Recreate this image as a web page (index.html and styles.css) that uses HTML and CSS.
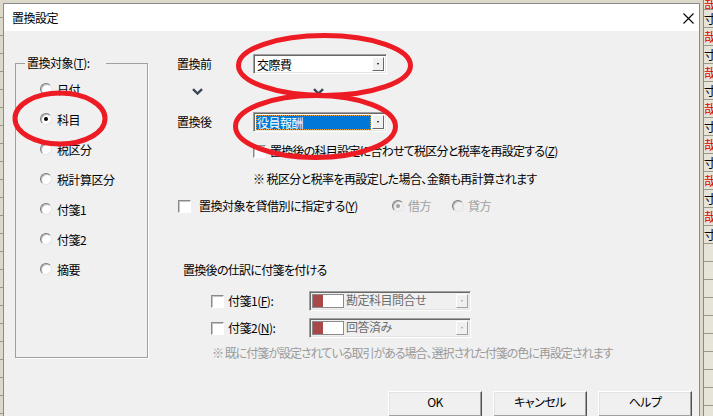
FILE: index.html
```html
<!DOCTYPE html>
<html lang="ja">
<head>
<meta charset="UTF-8">
<title>置換設定</title>
<link rel="stylesheet" href="styles.css">
</head>
<body>

<div class="sheet-edge"></div>

<div class="dialog">
    <div class="titlebar">
        <span class="title">置換設定</span>
        <svg class="close" width="11" height="11" viewBox="0 0 11 11"><path d="M0.5 0.5 L10.5 10.5 M10.5 0.5 L0.5 10.5" stroke="#000" stroke-width="1.1" fill="none"/></svg>
    </div>

    <div class="client">
        <fieldset class="target-group">
            <legend>置換対象(<u>T</u>):</legend>
            <div class="radio-row"><span class="radio"></span>日付</div>
            <div class="radio-row"><span class="radio checked"></span>科目</div>
            <div class="radio-row"><span class="radio"></span>税区分</div>
            <div class="radio-row"><span class="radio"></span>税計算区分</div>
            <div class="radio-row"><span class="radio"></span>付箋1</div>
            <div class="radio-row"><span class="radio"></span>付箋2</div>
            <div class="radio-row"><span class="radio"></span>摘要</div>
        </fieldset>

        <div class="main">
            <div class="field-row row-before">
                <span class="field-label">置換前</span>
                <div class="combo">
                    <span class="combo-text">交際費</span>
                    <span class="combo-btn"><i class="tri"></i></span>
                </div>
            </div>

            <div class="arrows">
                <svg class="chevron" width="11" height="7" viewBox="0 0 11 7"><path d="M1 1.2 L5.5 5.5 L10 1.2" stroke="#3a4658" stroke-width="2.4" fill="none"/></svg>
                <svg class="chevron second" width="11" height="7" viewBox="0 0 11 7"><path d="M1 1.2 L5.5 5.5 L10 1.2" stroke="#3a4658" stroke-width="2.4" fill="none"/></svg>
            </div>

            <div class="field-row">
                <span class="field-label">置換後</span>
                <div class="combo">
                    <span class="combo-text selected">役員報酬</span>
                    <span class="combo-btn"><i class="tri"></i></span>
                </div>
            </div>

            <div class="check-row reset-row">
                <span class="checkbox"></span>
                <span>置換後の科目設定に合わせて税区分と税率を再設定する(<u>Z</u>)</span>
            </div>

            <div class="note">※ 税区分と税率を再設定した場合、金額も再計算されます</div>

            <div class="check-row split-row">
                <span class="checkbox"></span>
                <span class="split-label">置換対象を貸借別に指定する(<u>Y</u>)</span>
                <span class="opt"><span class="radio disabled checked"></span>借方</span>
                <span class="opt"><span class="radio disabled"></span>貸方</span>
            </div>

            <div class="tag-heading">置換後の仕訳に付箋を付ける</div>

            <div class="check-row tag-row first">
                <span class="checkbox"></span>
                <span class="tag-label">付箋1(<u>F</u>):</span>
                <div class="combo tag-combo">
                    <span class="swatch"><i></i></span>
                    <span class="combo-text">勘定科目問合せ</span>
                    <span class="combo-btn"><i class="tri"></i></span>
                </div>
            </div>

            <div class="check-row tag-row">
                <span class="checkbox"></span>
                <span class="tag-label">付箋2(<u>N</u>):</span>
                <div class="combo tag-combo">
                    <span class="swatch"><i></i></span>
                    <span class="combo-text">回答済み</span>
                    <span class="combo-btn"><i class="tri"></i></span>
                </div>
            </div>

            <div class="tag-note">※ 既に付箋が設定されている取引がある場合、選択された付箋の色に再設定されます</div>

            <div class="buttons">
                <button class="btn">OK</button>
                <button class="btn">キャンセル</button>
                <button class="btn">ヘルプ</button>
            </div>
        </div>
    </div>
</div>

<div class="sheet">
    <div class="cell top red">哉</div>
    <div class="cell">寸</div>
    <div class="cell red">哉</div>
    <div class="cell">寸</div>
    <div class="cell red">哉</div>
    <div class="cell">寸</div>
    <div class="cell red">哉</div>
    <div class="cell">寸</div>
    <div class="cell red">哉</div>
    <div class="cell">寸</div>
    <div class="cell red">哉</div>
    <div class="cell">寸</div>
    <div class="cell red">哉</div>
    <div class="cell">寸</div>
    <div class="cell"></div>
    <div class="cell"></div>
    <div class="cell"></div>
    <div class="cell"></div>
    <div class="cell"></div>
    <div class="cell"></div>
    <div class="cell"></div>
    <div class="cell"></div>
    <div class="cell"></div>
    <div class="cell"></div>
</div>

<!-- red hand-drawn marks over the dialog -->
<svg class="marks" width="713" height="416" viewBox="0 0 713 416">
    <ellipse cx="324.5" cy="65.5" rx="86" ry="30" fill="none" stroke="#ed1c24" stroke-width="5"/>
    <ellipse cx="315.5" cy="126.5" rx="80" ry="31" fill="none" stroke="#ed1c24" stroke-width="5"/>
    <ellipse cx="60" cy="118.5" rx="45" ry="25.5" fill="none" stroke="#ed1c24" stroke-width="5"/>
</svg>

</body>
</html>
```

FILE: styles.css
```css
/* Windows style dialog */
body {
    margin: 0;
    width: 713px;
    height: 416px;
    overflow: hidden;
    position: relative;
    display: flex;
    align-items: flex-start;
    background-color: #dcd8ca;
    font-family: "Noto Sans CJK JP", "Noto Sans", sans-serif;
    font-size: 12px;
    font-feature-settings: "palt";
    letter-spacing: -0.5px;
    color: #000;
}

u {
    text-decoration: underline;
    text-underline-offset: 1px;
}

.sheet-edge {
    width: 3px;
    height: 416px;
    flex: none;
    background: repeating-linear-gradient(#dcd8ca 0, #dcd8ca 17px, #9c9888 17px, #9c9888 18px);
}

.dialog {
    width: 697px;
    height: 420px;
    margin-top: 3px;
    flex: none;
    box-sizing: border-box;
    border: 1px solid #8a8a8a;
    border-bottom: none;
    background-color: #f0f0f0;
}

.titlebar {
    height: 27px;
    background-color: #fff;
    display: flex;
    align-items: center;
    justify-content: space-between;
    padding: 0 5px 0 8px;
}

.title {
    line-height: 16px;
}

.close {
    margin-top: 1px;
}

.client {
    display: flex;
    align-items: flex-start;
    padding-left: 11px;
}

/* left group box */
.target-group {
    box-sizing: border-box;
    width: 133px;
    height: 303px;
    margin: 24px 29px 0 0;
    padding: 3px 0 0 9px;
    border: 1px solid #a0a0a0;
    box-shadow: 1px 1px 0 #fff;
    min-width: 0;
}

.target-group legend {
    padding: 0 16px 0 2px;
    line-height: 16px;
}

.radio-row {
    display: flex;
    align-items: center;
    gap: 5px;
    height: 30px;
    padding-left: 15px;
}

.radio {
    width: 12px;
    height: 12px;
    box-sizing: border-box;
    flex: none;
    border-radius: 50%;
    border: 1px solid;
    border-color: #7c7c7c #e4e4e4 #e4e4e4 #7c7c7c;
    background-color: #fff;
    box-shadow: inset 1px 1px 0 #b8b8b8;
    display: flex;
    align-items: center;
    justify-content: center;
}

.radio.checked::after {
    content: "";
    width: 4px;
    height: 4px;
    border-radius: 50%;
    background-color: #000;
}

.radio.disabled {
    background-color: #f0f0f0;
}

.radio.disabled.checked::after {
    background-color: #a0a0a0;
}

/* right side */
.main {
    flex: 1;
    display: flex;
    flex-direction: column;
}

.field-row {
    display: flex;
    align-items: center;
    height: 20px;
}

.row-before {
    margin-top: 23px;
}

.field-label {
    width: 76px;
    line-height: 16px;
}

.combo {
    width: 134px;
    height: 20px;
    box-sizing: border-box;
    display: flex;
    padding: 1px;
    border: 1px solid;
    border-color: #a0a0a0 #fff #fff #a0a0a0;
    box-shadow: inset 1px 1px 0 #696969, inset -1px -1px 0 #e3e3e3;
    background-color: #fff;
}

.combo-text {
    flex: 1;
    line-height: 16px;
    padding-left: 1px;
    white-space: nowrap;
    margin: 1px 0 0 1px;
}

.combo-text.selected {
    background-color: #0078d7;
    color: #fff;
    outline: 1px dotted #e8a040;
    outline-offset: -1px;
}

.combo-btn {
    width: 12px;
    height: 14px;
    flex: none;
    margin: 1px 1px 0 1px;
    box-sizing: border-box;
    border: 1px solid;
    border-color: #fff #696969 #696969 #fff;
    background-color: #f0f0f0;
    display: flex;
    align-items: center;
    justify-content: center;
}

.tri {
    width: 0;
    height: 0;
    border-left: 1px solid transparent;
    border-right: 1px solid transparent;
    border-top: 2px solid #000;
}

.arrows {
    height: 38px;
    display: flex;
    align-items: flex-start;
}

.chevron {
    margin: 14px 0 0 15px;
}

.chevron.second {
    margin-left: 110px;
}

.check-row {
    display: flex;
    align-items: center;
    height: 16px;
    line-height: 16px;
}

.checkbox {
    width: 13px;
    height: 13px;
    box-sizing: border-box;
    flex: none;
    border: 1px solid;
    border-color: #8a8a8a #fff #fff #8a8a8a;
    box-shadow: inset 1px 1px 0 #c4c4c4;
    background-color: #fff;
    margin-right: 4px;
}

.reset-row {
    margin-top: 11px;
    padding-left: 76px;
    letter-spacing: -0.75px;
}

.note {
    margin-top: 12px;
    line-height: 16px;
    padding-left: 76px;
    letter-spacing: -0.6px;
}

.split-row {
    margin-top: 11px;
    padding-left: 1px;
}

.split-row .checkbox {
    margin-right: 8px;
}

.split-label {
    width: 193px;
    white-space: nowrap;
}

.opt {
    width: 60px;
    display: flex;
    align-items: center;
    gap: 4px;
    color: #a0a0a0;
}

.tag-heading {
    margin-top: 48px;
    line-height: 16px;
    padding-left: 6px;
    letter-spacing: -0.7px;
}

.tag-row {
    height: 20px;
    margin-top: 7px;
    padding-left: 34px;
}

.tag-row.first {
    margin-top: 13px;
}

.tag-label {
    width: 81px;
}

.tag-combo {
    width: 162px;
    background-color: #f0f0f0;
}

.tag-combo .combo-text {
    color: #6d6d6d;
    margin-top: -1px;
    line-height: 16px;
    padding-left: 0;
}

.tag-combo .combo-btn {
    border-color: #fff #a0a0a0 #a0a0a0 #fff;
}

.tag-combo .tri {
    border-top-color: #a0a0a0;
}

.swatch {
    width: 32px;
    height: 14px;
    flex: none;
    margin: 1px 1px 0 1px;
    box-sizing: border-box;
    border: 1px solid #8a8a8a;
    background-color: #fff;
    display: flex;
}

.swatch i {
    width: 10px;
    background-color: #a94848;
}

.tag-note {
    margin-top: 7px;
    line-height: 16px;
    padding-left: 35px;
    color: #9a9a9a;
    letter-spacing: -1px;
}

.buttons {
    margin-top: 30px;
    display: flex;
    justify-content: flex-end;
    gap: 11px;
    padding-right: 7px;
}

.btn {
    width: 94px;
    height: 26px;
    font-family: inherit;
    font-size: 12px;
    font-feature-settings: "palt";
    letter-spacing: -0.5px;
    color: #000;
    background-color: #f0f0f0;
    border: 1px solid;
    border-color: #fff #505050 #505050 #fff;
    box-shadow: inset -1px -1px 0 #a0a0a0, inset 1px 1px 0 #e3e3e3;
    padding: 0 0 5px;
    line-height: 16px;
}

/* spreadsheet showing behind the dialog */
.sheet {
    flex: 1;
    height: 416px;
    margin-left: 3px;
    border-left: 1px solid #8a8a8a;
    background: repeating-linear-gradient(#dcd8ca 0, #dcd8ca 17px, #9c9888 17px, #9c9888 18px);
    background-position: 0 10px;
    overflow: hidden;
}

.cell {
    height: 17px;
    line-height: 17px;
    border-bottom: 1px solid #9c9888;
    background-color: #e6e3d8;
    white-space: nowrap;
    overflow: hidden;
}

.cell.top {
    height: 9px;
    line-height: 9px;
}

.cell.red {
    color: #e00000;
}

.marks {
    position: absolute;
    top: 0;
    left: 0;
    pointer-events: none;
}
```
